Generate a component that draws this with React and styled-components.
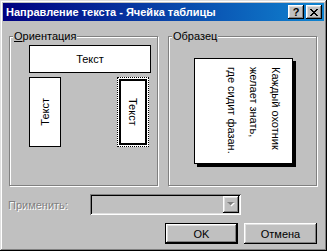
import React from 'react';
import styled, {createGlobalStyle} from 'styled-components';

const Global = createGlobalStyle`
    body {
        margin: 0;
        background: #c0c0c0;
    }
`

const raised = `
    box-shadow: inset -1px -1px #000, inset 1px 1px #fff, inset -2px -2px #808080, inset 2px 2px #dfdfdf;
`

const App = () =>{

    return(
        <>
            <Global/>
            <Window>
                <TitleBar>
                    <TitleText>Направление текста - Ячейка таблицы</TitleText>
                    <TitleButtons>
                        <CaptionButton>?</CaptionButton>
                        <CaptionButton>
                            <svg width="8" height="7" viewBox="0 0 8 7">
                                <path d="M0 0h2v1h1v1h2V1h1V0h2v1H7v1H6v1H5v1h1v1h1v1h1v1H6V6H5V5H3v1H2v1H0V6h1V5h1V4h1V3H2V2H1V1H0z" fill="#000"/>
                            </svg>
                        </CaptionButton>
                    </TitleButtons>
                </TitleBar>
                <Body>
                    <FrameRow>
                        <Frame>
                            <Legend><u>О</u>риентация</Legend>
                            <OrientGrid>
                                <HorizontalOption>Текст</HorizontalOption>
                                <VerticalRow>
                                    <VerticalOption>
                                        <UpText>Текст</UpText>
                                    </VerticalOption>
                                    <SelectedOption>
                                        <SelectedInner>
                                            <DownText>Текст</DownText>
                                        </SelectedInner>
                                    </SelectedOption>
                                </VerticalRow>
                            </OrientGrid>
                        </Frame>
                        <Frame>
                            <Legend>Образец</Legend>
                            <SampleWrap>
                                <Sample>
                                    Каждый охотник<br/>
                                    желает знать,<br/>
                                    где сидит фазан.
                                </Sample>
                            </SampleWrap>
                        </Frame>
                    </FrameRow>
                    <ApplyRow>
                        <DisabledLabel>Применить:</DisabledLabel>
                        <Combo>
                            <ComboArrow>
                                <svg width="8" height="5" viewBox="0 0 8 5">
                                    <path d="M1 1h7L4.5 4.5z" fill="#fff"/>
                                    <path d="M0 0h7L3.5 3.5z" fill="#808080"/>
                                </svg>
                            </ComboArrow>
                        </Combo>
                    </ApplyRow>
                    <ButtonRow>
                        <DialogButton $isDefault>OK</DialogButton>
                        <DialogButton>Отмена</DialogButton>
                    </ButtonRow>
                </Body>
            </Window>
        </>
    )
}

export default App;


const Window = styled.div`
    width: 327px;
    height: 251px;
    box-sizing: border-box;
    padding: 3px;
    background: #c0c0c0;
    box-shadow: inset -1px -1px #000, inset 1px 1px #dfdfdf, inset -2px -2px #808080, inset 2px 2px #fff;
    display: flex;
    flex-direction: column;
    font-family: "Liberation Sans", Arial, sans-serif;
    font-size: 11px;
    color: #000;
`

const TitleBar = styled.div`
    height: 18px;
    display: flex;
    align-items: center;
    justify-content: space-between;
    padding: 0 2px 0 3px;
    background: linear-gradient(90deg, #000080, #1084d0);
`

const TitleText = styled.span`
    color: #fff;
    font-weight: bold;
    font-size: 11px;
    white-space: nowrap;
`

const TitleButtons = styled.div`
    display: flex;
    gap: 2px;
`

const CaptionButton = styled.div`
    width: 16px;
    height: 14px;
    background: #c0c0c0;
    ${raised}
    display: flex;
    align-items: center;
    justify-content: center;
    font-weight: bold;
    font-size: 11px;
    line-height: 14px;
`

const Body = styled.div`
    flex: 1;
    display: flex;
    flex-direction: column;
    padding: 9px 7px 0 6px;
`

const FrameRow = styled.div`
    display: flex;
    gap: 10px;
`

const Frame = styled.fieldset`
    margin: 0;
    padding: 0;
    min-width: 0;
    width: 149px;
    height: 156px;
    box-sizing: border-box;
    border: 1px solid #808080;
    box-shadow: inset 1px 1px #fff, 1px 1px #fff;
`

const Legend = styled.legend`
    margin-left: 3px;
    padding: 0 1px;
    line-height: 13px;
    background: #c0c0c0;
`

const OrientGrid = styled.div`
    display: flex;
    flex-direction: column;
    gap: 4px;
    width: 122px;
    padding: 2px 0 0 19px;
`

const HorizontalOption = styled.div`
    height: 28px;
    box-sizing: border-box;
    border: 1px solid #000;
    background: #fff;
    display: flex;
    align-items: center;
    justify-content: center;
`

const VerticalRow = styled.div`
    display: flex;
    justify-content: space-between;
    width: 120px;
`

const VerticalOption = styled.div`
    width: 32px;
    height: 70px;
    box-sizing: border-box;
    border: 1px solid #000;
    background: #fff;
    display: flex;
    align-items: center;
    justify-content: center;
`

const SelectedOption = styled.div`
    width: 32px;
    height: 70px;
    box-sizing: border-box;
    border: 1px dotted #000;
    padding: 1px;
    background: #fff;
    display: flex;
`

const SelectedInner = styled.div`
    flex: 1;
    border: 2px solid #000;
    display: flex;
    align-items: center;
    justify-content: center;
`

const DownText = styled.span`
    writing-mode: vertical-rl;
`

const UpText = styled.span`
    writing-mode: vertical-rl;
    transform: rotate(180deg);
`

const SampleWrap = styled.div`
    padding: 15px 0 0 25px;
`

const Sample = styled.div`
    width: 99px;
    height: 106px;
    box-sizing: border-box;
    border: 1px solid #000;
    background: #fff;
    box-shadow: 3px 3px 0 #000;
    writing-mode: vertical-rl;
    line-height: 22px;
    padding: 8px 5px 0 0;
    white-space: nowrap;
`

const ApplyRow = styled.div`
    display: flex;
    align-items: center;
    margin-top: 8px;
`

const DisabledLabel = styled.span`
    width: 82px;
    margin-left: -1px;
    color: #808080;
    text-shadow: 1px 1px #fff;
`

const Combo = styled.div`
    width: 151px;
    height: 21px;
    box-sizing: border-box;
    padding: 2px;
    background: #c0c0c0;
    box-shadow: inset 1px 1px #808080, inset -1px -1px #fff, inset 2px 2px #000, inset -2px -2px #dfdfdf;
    display: flex;
    justify-content: flex-end;
`

const ComboArrow = styled.div`
    width: 16px;
    height: 17px;
    background: #c0c0c0;
    ${raised}
    display: flex;
    align-items: center;
    justify-content: center;
`

const ButtonRow = styled.div`
    display: flex;
    justify-content: flex-end;
    gap: 6px;
    margin-top: 8px;
`

const DialogButton = styled.div`
    width: 73px;
    height: 21px;
    box-sizing: border-box;
    background: #c0c0c0;
    display: flex;
    align-items: center;
    justify-content: center;
    border: ${(props)=>props.$isDefault ? `1px solid #000` : `none`};
    ${raised}
`
